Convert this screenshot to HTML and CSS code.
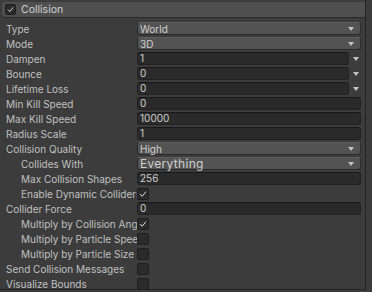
FILE: index.html
```html
<!DOCTYPE html>
<html lang="en">
<head>
    <meta charset="UTF-8">
    <title>Collision</title>
    <link rel="stylesheet" href="styles.css">
</head>
<body>
  <div class="inspector">
    <div class="module-header">
      <span class="checkbox checked"><svg viewBox="0 0 12 12"><path d="M2.5 6.2 L5 8.7 L9.6 3.2" /></svg></span>
      <span class="module-title">Collision</span>
    </div>

    <div class="rows">
      <div class="row">
        <label class="label">Type</label>
        <div class="popup"><span>World</span><i class="arrow"></i></div>
      </div>
      <div class="row">
        <label class="label">Mode</label>
        <div class="popup"><span>3D</span><i class="arrow"></i></div>
      </div>
      <div class="row">
        <label class="label">Dampen</label>
        <div class="field">1</div><i class="arrow curve"></i>
      </div>
      <div class="row">
        <label class="label">Bounce</label>
        <div class="field">0</div><i class="arrow curve"></i>
      </div>
      <div class="row">
        <label class="label">Lifetime Loss</label>
        <div class="field">0</div><i class="arrow curve"></i>
      </div>
      <div class="row">
        <label class="label">Min Kill Speed</label>
        <div class="field">0</div>
      </div>
      <div class="row">
        <label class="label">Max Kill Speed</label>
        <div class="field">10000</div>
      </div>
      <div class="row">
        <label class="label">Radius Scale</label>
        <div class="field">1</div>
      </div>
      <div class="row">
        <label class="label">Collision Quality</label>
        <div class="popup"><span>High</span><i class="arrow"></i></div>
      </div>
      <div class="row sub">
        <label class="label">Collides With</label>
        <div class="popup mask"><span>Everything</span><i class="arrow"></i></div>
      </div>
      <div class="row sub">
        <label class="label">Max Collision Shapes</label>
        <div class="field">256</div>
      </div>
      <div class="row sub">
        <label class="label">Enable Dynamic Colliders</label>
        <span class="checkbox checked"><svg viewBox="0 0 12 12"><path d="M2.5 6.2 L5 8.7 L9.6 3.2" /></svg></span>
      </div>
      <div class="row">
        <label class="label">Collider Force</label>
        <div class="field">0</div>
      </div>
      <div class="row sub">
        <label class="label">Multiply by Collision Angle</label>
        <span class="checkbox checked"><svg viewBox="0 0 12 12"><path d="M2.5 6.2 L5 8.7 L9.6 3.2" /></svg></span>
      </div>
      <div class="row sub">
        <label class="label">Multiply by Particle Speed</label>
        <span class="checkbox"></span>
      </div>
      <div class="row sub">
        <label class="label">Multiply by Particle Size</label>
        <span class="checkbox"></span>
      </div>
      <div class="row">
        <label class="label">Send Collision Messages</label>
        <span class="checkbox"></span>
      </div>
      <div class="row">
        <label class="label">Visualize Bounds</label>
        <span class="checkbox"></span>
      </div>
    </div>
  </div>
</body>
</html>
```

FILE: styles.css
```css
/* Unity dark inspector */
body {
  margin: 0;
  background-color: #3c3c3c;
  font-family: "Inter", "Roboto", sans-serif;
  font-size: 10px;
  color: #c0c0c0;
}

.inspector {
  width: 366px;
  height: 290px;
  padding-top: 2px;
  box-sizing: border-box;
  border-right: 1px solid #242424;
  border-bottom: 1px solid #242424;
  overflow: hidden;
}

/* Module header bar */
.module-header {
  display: flex;
  align-items: center;
  height: 15px;
  margin-left: 2px;
  padding-left: 3px;
  background-color: #4f4f4f;
  border-radius: 3px 0 0 3px;
  box-shadow: 0 1px 0 #2a2a2a;
}

.module-title {
  margin-left: 5px;
  color: #d2d2d2;
  font-size: 10.5px;
}

.rows {
  margin-top: 4px;
}

.row {
  display: flex;
  align-items: center;
  height: 15px;
  padding-left: 6px;
  padding-right: 4px;
}

.label {
  width: 131px;
  flex: none;
  white-space: nowrap;
  overflow: hidden;
  box-sizing: border-box;
  padding-right: 1px;
}

.sub .label {
  padding-left: 15px;
}

/* Dropdowns */
.popup {
  flex: 1;
  display: flex;
  align-items: center;
  justify-content: space-between;
  height: 13px;
  padding: 0 6px 0 2px;
  background-color: #535353;
  border: 1px solid #2b2b2b;
  border-top-color: #5e5e5e;
  border-radius: 3px;
  box-sizing: border-box;
  color: #d0d0d0;
}

.popup.mask span {
  font-size: 12px;
  letter-spacing: 0.3px;
}

/* Number fields */
.field {
  flex: 1;
  height: 13px;
  line-height: 11px;
  padding-left: 2px;
  background-color: #2a2a2a;
  border: 1px solid #212121;
  border-top-color: #191919;
  border-radius: 3px;
  box-sizing: border-box;
  color: #d0d0d0;
}

.arrow {
  width: 0;
  height: 0;
  border-left: 3.5px solid transparent;
  border-right: 3.5px solid transparent;
  border-top: 4px solid #c4c4c4;
}

.arrow.curve {
  margin: 0 2px 0 4px;
}

/* Toggles */
.checkbox {
  display: inline-block;
  flex: none;
  width: 12px;
  height: 12px;
  background-color: #2b2b2b;
  border: 1px solid #1e1e1e;
  border-radius: 2px;
  box-sizing: border-box;
}

.module-header .checkbox {
  width: 11px;
  height: 11px;
}

.checkbox svg {
  display: block;
  width: 100%;
  height: 100%;
}

.checkbox path {
  fill: none;
  stroke: #e2e2e2;
  stroke-width: 1.2;
}
```
